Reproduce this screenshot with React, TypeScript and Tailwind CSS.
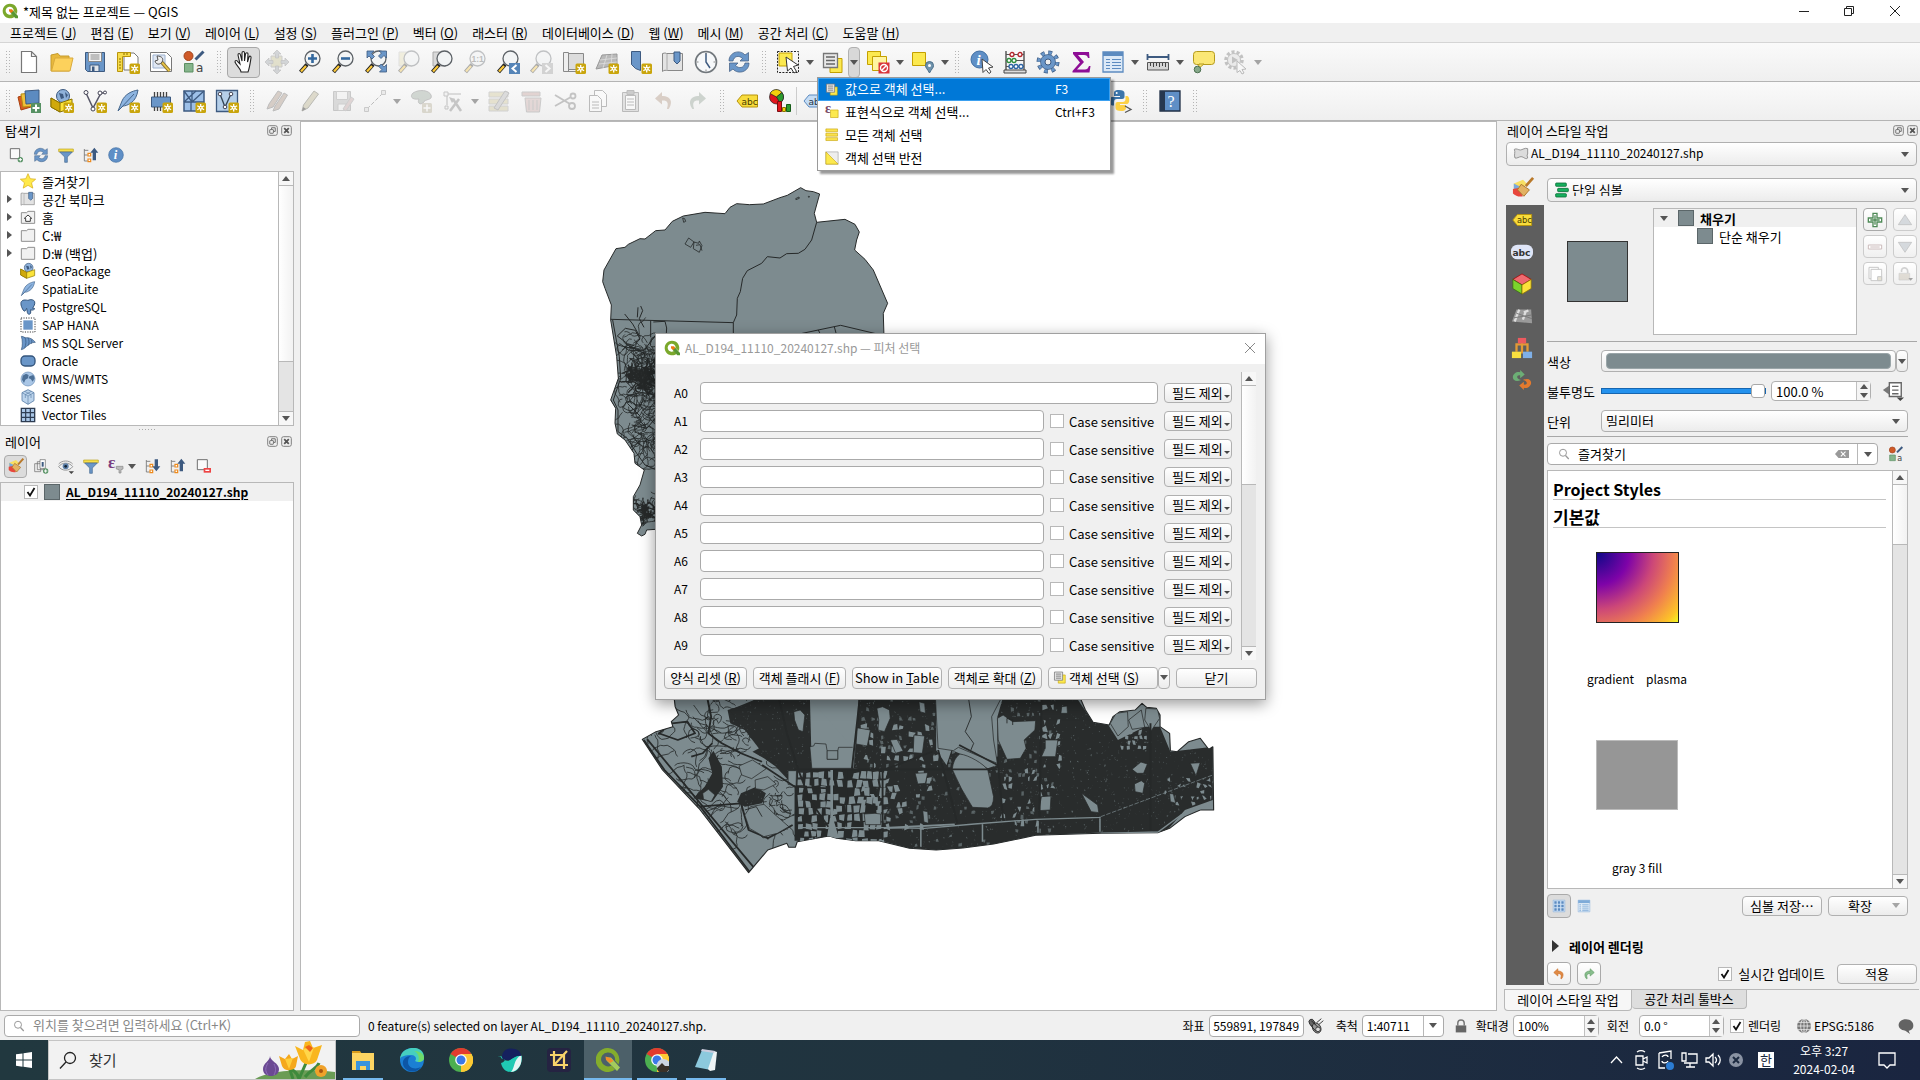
import React, { useId } from "react";

/* ---------- icon drawings (24 x 24 grid) ---------- */

const BLUE = "#6a96c8";
const NAVY = "#3d5a80";

const badge = (
  <g transform="translate(13.5 13.5)">
    <rect width="10.5" height="10.5" rx="1.5" fill="#c9a50c" />
    <path d="M5.2 1.4v7.6M1.8 3.2l6.8 4M8.6 3.2l-6.8 4" stroke="#fff" strokeWidth="1.3" />
    <circle cx="5.2" cy="5.2" r="1.9" fill="#fff" />
    <circle cx="5.2" cy="5.2" r="0.8" fill="#c9a50c" />
  </g>
);

const lens = (
  <>
    <path d="M9 14.5L2.5 22" stroke="#222" strokeWidth="4" />
    <path d="M8 16L3 21.5" stroke="#fcc93a" strokeWidth="2.2" />
    <circle cx="14.5" cy="8.5" r="7.5" fill="#f2f4f5" stroke="#5c6166" strokeWidth="1.3" />
  </>
);

const pencil = (
  <>
    <path d="M4 22l1.5-6L16 2l4.500 3L10 19z" fill="#c9c3a8" stroke="#8a8a80" />
    <path d="M4 22l1.300-4 2.700 2z" fill="#555" />
  </>
);

const sheet = <path d="M4.500 1.500h10l5 5v16h-15zM14.500 1.500v5h5" fill="#fff" stroke="#777" strokeWidth="1.2" />;

const undo = "M10 3L3 9.500l7 6v-4c5-.5 7 2 5 8 0 .8 1.500.8 2 0 5-8 0-13-7-12.500z";

const icons: Record<string, React.ReactNode> = {
  doc: sheet,
  folder: (
    <>
      <path d="M1 5l7-1.500 2 2.500h9v15H1z" fill="#e8b93c" stroke="#c59a2a" />
      <path d="M5 8h18l-3 13H1.500z" fill="#fcd15c" stroke="#d9aa3c" />
    </>
  ),
  save: (
    <>
      <path d="M2.500 2.500h19v19h-17l-2-2z" fill={BLUE} stroke={NAVY} />
      <path d="M5.500 2.500h13v9h-13z" fill="#f4f4f4" stroke="#888" />
      <path d="M7.500 5h9M7.500 7h9M7.500 9h9" stroke="#888" />
      <path d="M7 15h9v6.500H7z" fill="#e2e6ea" stroke={NAVY} />
      <path d="M9 16.500h2.500V21H9z" fill={NAVY} />
    </>
  ),
  layout: (
    <>
      <path d="M8 3h10l4 4v13H8z" fill="#fff" stroke="#777" />
      <path d="M1.500 2.500h13v4h-8v15h-5z" fill="#f6dc4b" stroke="#b8940c" />
      <path d="M3 9h2M3 12h2M3 15h2M3 18h2M8 3v2M11 3v2" stroke="#8a6d00" />
      {badge}
    </>
  ),
  manager: (
    <>
      <path d="M1.500 2.500h16l5 5v14h-21z" fill="#fff" stroke="#777" />
      <path d="M4 5h12v13H4z" fill="#dfe7f3" stroke="#9db1cf" />
      <path d="M12.500 12l8 9" stroke="#8a7330" strokeWidth="3.500" />
      <path d="M13 12.500l7.500 8.500" stroke="#ecc94b" strokeWidth="1.800" />
      <path d="M8 6l1 4-3 1c1 4 5 4 7 1 2-3 0-6-5-6z" fill="#eee" stroke="#555" />
    </>
  ),
  style: (
    <>
      <circle cx="6.500" cy="6" r="4.500" fill="#cf5a28" stroke="#a2431a" />
      <path d="M2.500 13.500h8.500V22H2.500z" fill="#86b58c" stroke="#5c8f63" />
      <path d="M21.500 1.500l-8 8" stroke={NAVY} strokeWidth="3" />
      <text x="14" y="22" fontSize="12" fontFamily="DejaVu Sans" fill="#444">a</text>
    </>
  ),
  hand: (
    <path d="M9 22c0-3-5-7-6-10 0-2 2-2 3 0l2 2-2-9c0-2 2-2 2.500 0l1.500 6V3c0-2 2.500-2 2.500 0v8l1-7c.5-2 2.500-1.500 2.500 0l-.5 8 1.500-5c.7-1.500 2.500-1 2 1-1 6-1.500 10-3 14z" fill="#fff" stroke="#222" strokeWidth="1.100" />
  ),
  pansel: (
    <g opacity=".55">
      <path d="M6 6h11v11H6z" fill="#d3cfab" stroke="#aaa" />
      <path d="M12 0l4 4h-2.500v4h-3V4H8zM12 24l4-4h-2.500v-4h-3v4H8zM0 12l4-4v2.500h4v3H4V16zM24 12l-4-4v2.500h-4v3h4V16z" fill="#b7bbbf" stroke="#999" strokeWidth=".7" />
    </g>
  ),
  zoomin: <>{lens}<path d="M14.500 4v9M10 8.500h9" stroke="#34699f" strokeWidth="2.600" /></>,
  zoomout: <>{lens}<path d="M10 8.500h9" stroke="#34699f" strokeWidth="2.600" /></>,
  zoomfull: (
    <>
      {lens}
      <path d="M3 1h7L7.500 3.500l3 3-2.500 2.500-3-3L3 8zM22.500 1v7L20 5.500l-3 3L14.500 6l3-3L15 1zM22.500 22h-7l2.300-2.500-3-3 2.400-2.500 3 3 2.300-2.500z" fill={BLUE} stroke={NAVY} strokeWidth=".8" />
    </>
  ),
  zoomsel: <g opacity=".35"><path d="M2 2h13v14H2z" fill="#e5deb0" stroke="#bbb" />{lens}</g>,
  zoomlayer: <><path d="M3 2h13v14H3z" fill="#d9d9d9" stroke="#aaa" />{lens}</>,
  native: <g opacity=".35">{lens}<text x="8.500" y="12" fontSize="8.500" fontWeight="bold" fontFamily="Liberation Sans" fill="#555">1:1</text></g>,
  zoomlast: <>{lens}<path d="M13 13h11v11H13z" fill="#5584b7" /><path d="M20.500 15l-4 3.500 4 3.500" fill="none" stroke="#fff" strokeWidth="2" /></>,
  zoomnext: <g opacity=".35">{lens}<path d="M13 13h11v11H13z" fill="#999" /><path d="M16.500 15l4 3.500-4 3.500" fill="none" stroke="#fff" strokeWidth="2" /></g>,
  newmap: <><path d="M5.500 3.500h16v16h-16z" fill="#dcdcdc" stroke="#888" /><path d="M1.500 2.500h5v19h-5z" fill="#eee" stroke="#888" /><path d="M5 21.500h12" stroke="#888" />{badge}</>,
  threeD: <><path d="M7 5l15-1v11l-21 4z" fill="#b9b9b9" stroke="#999" /><path d="M5 10l17-2M4 14l18-2M12 5L8 18M17 4l-1 12" stroke="#dedede" strokeWidth=".8" />{badge}</>,
  bmnew: <><path d="M3.500 1.500h9v19l-5-2-4-4z" fill={BLUE} stroke={NAVY} />{badge}</>,
  bookmark: <><path d="M1.500 3.500c3-1 4 0 4 0h16v17h-16c-2-1-4 1-4 1z" fill="#e3e3e3" stroke="#888" /><path d="M6 4v17" stroke="#aaa" /><path d="M13 2h6v9l-3 3-3-3z" fill={BLUE} stroke={NAVY} /></>,
  clock: <><circle cx="12" cy="12" r="10.500" fill="#f6f8fa" stroke="#71777c" strokeWidth="1.600" /><path d="M12 3v9l4 6" fill="none" stroke="#3d5a80" strokeWidth="1.500" /><path d="M12 2.500v2M12 19.500v2M2.500 12h2M19.500 12h2" stroke="#888" /></>,
  refresh: (
    <>
      <path d="M2 11C2 2 13-1 18 5l3.500-2.500V11h-8.500l2.500-2.500C12 5 7 6 6 11z" fill={BLUE} stroke={NAVY} strokeWidth=".7" />
      <path d="M22 13c0 9-11 12-16 6L2.500 21.500V13H11l-2.500 2.500C12 19 17 18 18 13z" fill={BLUE} stroke={NAVY} strokeWidth=".7" />
    </>
  ),
  select: (
    <>
      <path d="M1.500 1.500h21v21h-21z" fill="none" stroke="#222" strokeDasharray="2 1.300" />
      <path d="M3 3h13v13H3z" fill="#fce94f" stroke="#c4a000" />
      <path d="M10 7l12 8-4.500 1.500 3 5-2.500 1.500-3-5-3.500 3z" fill="#fff" stroke="#333" />
    </>
  ),
  selvalue: (
    <>
      <path d="M9 8.500h12v14H9z" fill="#fce94f" stroke="#c4a000" />
      <path d="M2.500 3.500h14v14h-14z" fill="#e8e8e8" stroke="#777" strokeWidth="1.300" />
      <path d="M5 7h9M5 10.500h9M5 14h9" stroke="#666" strokeWidth="1.300" />
    </>
  ),
  deselect: (
    <>
      <path d="M1.500 1.500h13v13h-13z" fill="#fce94f" stroke="#c4a000" />
      <path d="M6.500 6.500h14v14h-14z" fill="#fff4a0" stroke="#c4a000" />
      <path d="M12.500 12.500h11v11h-11z" fill="#d9343a" />
      <circle cx="18" cy="18" r="3.500" fill="none" stroke="#fff" strokeWidth="1.400" />
      <path d="M15.500 20.500l5-5" stroke="#fff" strokeWidth="1.400" />
    </>
  ),
  selloc: <><path d="M1.500 2.500h13v13h-13z" fill="#fce94f" stroke="#c4a000" /><path d="M18.500 23c-2-4-4-5-4-7.500a4 4 0 018 0c0 2.500-2 3.500-4 7.500z" fill="#6f93ad" stroke="#4b6f8a" /><circle cx="18.500" cy="15.500" r="1.500" fill="#fff" /></>,
  identify: (
    <>
      <circle cx="9.500" cy="9.500" r="8.500" fill="#5f8fc6" stroke="#3f6ea3" />
      <text x="6.500" y="15" fontSize="15" fontStyle="italic" fontWeight="bold" fontFamily="Liberation Serif" fill="#fff">i</text>
      <path d="M12 9l11 8-4.500 1 2.500 4-2 1.500-3-4-3 3z" fill="#fff" stroke="#444" />
    </>
  ),
  abacus: (
    <>
      <path d="M3 1v19M21 1v19" stroke="#444" strokeWidth="1.300" />
      <path d="M1 20h22v3H1z" fill="#ddd" stroke="#444" />
      <path d="M3 4.500h18M3 10.500h18M3 16.500h18" stroke="#555" />
      <g fill="#fff" strokeWidth="1.300">
        <g stroke="#b3262b"><ellipse cx="9" cy="4.500" rx="2" ry="2" /><ellipse cx="17" cy="4.500" rx="2" ry="2" /></g>
        <g stroke="#2d8c3c"><ellipse cx="6" cy="10.500" rx="2" ry="2" /><ellipse cx="11" cy="10.500" rx="2" ry="2" /></g>
        <g stroke="#2b62a3"><ellipse cx="8" cy="16.500" rx="2" ry="2" /><ellipse cx="13" cy="16.500" rx="2" ry="2" /><ellipse cx="18" cy="16.500" rx="2" ry="2" /></g>
      </g>
    </>
  ),
  gear: (
    <>
      <circle cx="12" cy="12" r="9" fill="none" stroke={NAVY} strokeWidth="5" strokeDasharray="3.600 3.470" />
      <circle cx="12" cy="12" r="9" fill="none" stroke={BLUE} strokeWidth="3.500" strokeDasharray="3 4.070" strokeDashoffset="-.3" />
      <circle cx="12" cy="12" r="7.500" fill={BLUE} stroke={NAVY} strokeWidth=".7" />
      <circle cx="12" cy="12" r="3" fill="#f0f0f0" stroke={NAVY} />
    </>
  ),
  sigma: <path d="M4 2h16l.5 6h-1.500c-.5-2-1.500-3-4-3H9l6 7-7 7.500h8c2 0 3-1 4-3.500h1.500L20.500 22.500H3.500V21l7.500-8.500L4 4z" fill="#8e0e96" />,
  table: (
    <>
      <path d="M2 2h20v20H2z" fill="#dce9f7" stroke="#5c8bc0" strokeWidth="1.300" />
      <path d="M2 2h20v4H2z" fill="#5c8bc0" />
      <path d="M5 9.500h4M11 9.500h9M5 12.500h4M11 12.500h9M5 15.500h4M11 15.500h9M5 18.500h4M11 18.500h9" stroke="#5c8bc0" strokeWidth="1.200" />
    </>
  ),
  measure: (
    <>
      <path d="M1.500 7h21M1.500 4v6M22.500 4v6" stroke={NAVY} strokeWidth="1.800" />
      <path d="M1.500 12.500h21V20h-21z" fill="#d6d6d6" stroke="#555" />
      <path d="M4.500 13v3M7.500 13v4M10.500 13v3M13.500 13v4M16.500 13v3M19.500 13v4" stroke="#444" />
    </>
  ),
  tip: <><rect x="1.500" y="1.500" width="21" height="13" rx="3" fill="#fbe775" stroke="#b59a1c" /><path d="M7 14l-1 5 6-5z" fill="#fbe775" stroke="#b59a1c" /><circle cx="5.500" cy="19.500" r="3.300" fill="#86a98a" stroke="#4c6f50" /></>,
  action: <g opacity=".4"><circle cx="10" cy="10" r="8" fill="none" stroke="#777" strokeWidth="3.500" strokeDasharray="3 2" /><circle cx="10" cy="10" r="6.500" fill="#ddd" stroke="#777" /><path d="M8 6.500l6 3.500-6 3.500z" fill="#777" /><path d="M13 11l9 8-4 .5 2 3.500-2 1-2-3.500-3 2z" fill="#fff" stroke="#666" /></g>,
  datasource: (
    <>
      <path d="M1 8l10-3 3 13-10 3z" fill="#d95b22" stroke="#a9410f" />
      <path d="M4 5l11-1 2 13-11 1z" fill="#f0c03a" stroke="#b88c10" />
      <path d="M8 2l14-1v13L9 15z" fill="#5c8bc0" stroke={NAVY} />
      <path d="M14 14h10v10H14z" fill="#569163" /><path d="M19 15.500v7M15.500 19h7" stroke="#fff" strokeWidth="2" />
    </>
  ),
  geopkg: (
    <>
      <circle cx="13" cy="7" r="6.500" fill="#8fb2da" stroke={NAVY} /><path d="M9 4l4 1 1 4-3 1zM15 3l3 3-2 3z" fill={NAVY} />
      <path d="M1 9l9 5 12-4v9l-12 4-9-5z" fill="#fbe33a" stroke="#8a7200" /><path d="M1 9l9 5v9l-9-5z" fill="#d0a90c" stroke="#8a7200" />
    </>
  ),
  vec: <><path d="M3 4l7 15 8-15h4" fill="none" stroke="#556" strokeWidth="1.500" /><g fill="#fff" stroke="#445"><circle cx="3" cy="3.500" r="2" /><circle cx="10" cy="20" r="2" /><circle cx="17" cy="4" r="2" /><circle cx="22" cy="3.500" r="1.500" /></g></>,
  feather: <path d="M2 22L6 12C9 5 16 2 22 1c-1 6-3 10-7 13-3 2-6 3-8 3zM4 20L18 5" fill="#8db4e0" stroke="#45668c" />,
  chip: <><path d="M2.500 8h19v10h-19z" fill={BLUE} stroke={NAVY} /><path d="M5.500 3v5M8.500 3v5M11.500 3v5M14.500 3v5M17.500 3v5M5.500 18v4M8.500 18v4M11.500 18v4" stroke="#444" strokeWidth="1.300" /></>,
  mesh: <><path d="M2 2h20v20H2z" fill="#9dc0e8" stroke={NAVY} strokeWidth="1.500" /><path d="M2 13h20M9 13v9M2 2l8 11 12-11M10 2v11M2 13L14 2" fill="none" stroke={NAVY} strokeWidth="1.300" /></>,
  virt: <><path d="M1.500 1.500h21v21h-21z" fill="#b5cfe9" stroke={NAVY} strokeWidth="1.300" /><path d="M5 5l5 13 6-13" fill="none" stroke="#345" strokeWidth="1.300" /><g fill="#fff" stroke="#445"><circle cx="5" cy="5" r="1.800" /><circle cx="10" cy="18" r="1.800" /><circle cx="16" cy="5" r="1.800" /></g></>,
  pencils: <g opacity=".5"><path d="M2 20l2-5L13 2l4 2-9 14zM8 22l2-5L19 4l3.500 2L14 20z" fill="#b9a79a" stroke="#888" /></g>,
  pencil: <g opacity=".55">{pencil}</g>,
  savedim: <g opacity=".35"><path d="M2.500 2.500h17v19h-17z" fill="#aaa" stroke="#777" /><path d="M5.500 2.500h11v8h-11zM7 15h8v6.500H7z" fill="#eee" stroke="#888" /><path d="M12 20l8-12 3 2-8 12z" fill="#b99" stroke="#888" /></g>,
  digit: <g opacity=".45"><path d="M4 20L20 4" stroke="#777" strokeDasharray="4 2" /><path d="M1.500 18.500h4v4h-4zM18.500 1.500h4v4h-4z" fill="#ddd" stroke="#999" /></g>,
  blob: <g opacity=".4"><path d="M4 4c6-4 16-3 18 2 2 6-6 3-8 8-3 2-6 0-4-4-8 1-9-3-6-6z" fill="#9aa79b" stroke="#777" /><rect x="13" y="14" width="10" height="10" rx="1.500" fill="#b5ae96" /><path d="M18 15.500v7M14.500 19h7" stroke="#fff" strokeWidth="1.500" /></g>,
  vertex: <g opacity=".5"><path d="M6 6v10M6 5h14" stroke="#888" /><path d="M3 3h4v4H3zM4 17h3v3H4z" fill="#eee" stroke="#999" /><path d="M9 22L18 10M12 10l8 12" stroke="#999" strokeWidth="2.500" /><path d="M8 8l6 2-3 4z" fill="#999" /></g>,
  attrs: <g opacity=".45"><path d="M2 3h19v5H2zM2 10h19v5H2zM2 17h19v5H2z" fill="#d3cba2" stroke="#aaa" /><path d="M7 19L18 2l4 2-11 17z" fill="#bbb" stroke="#888" /></g>,
  trash: <g opacity=".45"><path d="M2 3h18v4H2z" fill="#c9a9a5" stroke="#999" /><path d="M5 9h16l-1.500 14h-13z" fill="#d0b5b3" stroke="#999" /><path d="M9 11v10M13 11v10M17 11v10" stroke="#999" /></g>,
  cut: <g opacity=".45" fill="none" stroke="#888" strokeWidth="1.800"><path d="M2 6l15 9M2 17L18 8" /><circle cx="19" cy="17" r="3" /><circle cx="20" cy="7" r="2.500" /></g>,
  copy: <g opacity=".45" fill="#fff" stroke="#777"><path d="M8.500 1.500h8l4 4v12h-12z" /><path d="M3.500 6.500h8l4 4v12h-12z" /><path d="M6 13h7M6 16h7M6 19h7" /></g>,
  paste: <g opacity=".45" stroke="#777"><path d="M3.500 3.500h16v19h-16z" fill="#ccc" /><path d="M6.500 6.500h10v14h-10z" fill="#fff" /><path d="M8 1.500h7v4H8z" fill="#999" /><path d="M8 10h7M8 13h7M8 16h7" /></g>,
  undodim: <path d={undo} fill="#cdbdb2" opacity=".7" />,
  redodim: <path d={undo} transform="matrix(-1 0 0 1 24 0)" fill="#bcc4bd" opacity=".7" />,
  undo: <path d={undo} fill="#e08a45" stroke="#c86c26" />,
  redo: <path d={undo} transform="matrix(-1 0 0 1 24 0)" fill="#88bd8c" stroke="#5c9761" />,
  label: <><path d="M2 12l5-6h15.500v12H7z" fill="#f8dc3c" stroke="#b8940c" /><text x="6.500" y="15.500" fontSize="9" fontFamily="DejaVu Sans" fill="#4a3c00">abc</text></>,
  labelblue: <><path d="M2 12l5-6h15.500v12H7z" fill="#c4dcf5" stroke="#5c8bc0" /><text x="6.500" y="15.500" fontSize="9" fontFamily="DejaVu Sans" fill="#234">abc</text></>,
  chart: (
    <>
      <circle cx="8.500" cy="8" r="7" fill="#e0161d" stroke="#222" strokeWidth=".7" />
      <path d="M8.500 8L2 4.500A7 7 0 0114 3.500z" fill="#f4d20c" stroke="#222" strokeWidth=".7" />
      <path d="M8.500 8L14 3.500A7 7 0 0112 14z" fill="#2b9b2e" stroke="#222" strokeWidth=".7" />
      <path d="M9.500 12.500h4v10h-4z" fill="#e0161d" stroke="#7a0c10" /><path d="M14.500 18.500h3v4h-3z" fill="#f4d20c" stroke="#8a7200" /><path d="M18.500 15.500h4v7h-4z" fill="#2b9b2e" stroke="#165c18" />
    </>
  ),
  python: (
    <>
      <path d="M11 1c-5 0-5 2-5 4v2h6v1H4c-3 0-3 8 0 8.500h2V13c0-2 1-3 3-3h5c2 0 2.500-1 2.500-2.500V4c0-2-2-3-5.500-3z" fill="#3c75aa" />
      <path d="M13 22c5 0 5-2 5-4v-2h-6v-1h7c3 0 3-8 0-8h-1.500v3c0 2-1 3-3 3h-5C8 13 7.500 14 7.500 15.500V19c0 2 2 3 5.500 3z" fill="#fcd045" />
      <circle cx="8.700" cy="4" r="1" fill="#fff" />
      <path d="M17 17l6 3.500-6 3" fill="none" stroke="#555" strokeWidth="1.300" />
    </>
  ),
  help: <><path d="M2 2h20v20H2z" fill="#5f8fc6" stroke="#1f2f45" strokeWidth="1.300" /><path d="M2 2h5v20H2z" fill="#27384f" /><text x="9.500" y="18" fontSize="16" fontFamily="Liberation Serif" fill="#fff">?</text></>,
  addlayer: <><path d="M3.500 2.500h14v15h-14z" fill="#fafafa" stroke="#666" strokeWidth="1.400" /><circle cx="18.500" cy="19" r="4" fill="#569163" /><path d="M18.500 16.500v5M16 19h5" stroke="#fff" strokeWidth="1.500" /></>,
  dellayer: <><path d="M3.500 2.500h15v15h-15z" fill="#fafafa" stroke="#666" strokeWidth="1.400" /><path d="M13 15h11v7H13z" fill="#e44" /><path d="M15.500 18.500h6" stroke="#fff" strokeWidth="2" /></>,
  filter: <><path d="M1 3h22v4H1z" fill="#f8e04a" stroke="#b8a020" /><path d="M2.500 7.500h19L14 15v8h-4v-8z" fill="#6a96c8" stroke="#44688f" /></>,
  collapse: <><path d="M2 3v18h5M2 5h6M2 12h5" fill="none" stroke="#777" strokeWidth="1.300" /><path d="M7.500 9.500h4v4h-4zM7.500 18h4v4h-4z" fill="#fff" stroke="#ee8a1c" strokeWidth="1.800" /><path d="M17 1l6 7.500h-3.500V20h-5V8.500H11z" fill={NAVY} /></>,
  expand: <><path d="M2 3v18h5M2 5h6M2 12h5" fill="none" stroke="#777" strokeWidth="1.300" /><path d="M7.500 9.500h4v4h-4zM7.500 18h4v4h-4z" fill="#fff" stroke="#ee8a1c" strokeWidth="1.800" /><path d="M17 20l6-7.500h-3.500V2h-5v10.500H11z" fill={NAVY} /></>,
  info: <><circle cx="12" cy="12" r="11" fill="#5f8fc6" stroke="#3f6ea3" /><text x="8.500" y="18.500" fontSize="19" fontStyle="italic" fontWeight="bold" fontFamily="Liberation Serif" fill="#fff">i</text></>,
  brush: <><path d="M2 7l10-4 4 4-6 7H2z" fill="#f8df63" /><path d="M2 7l6 3-2 4H2z" fill="#7aa8dc" /><path d="M1 13l6-1 5 9c-4 1-8 0-11-3z" fill="#e8473c" /><path d="M23 1l-8 9" stroke="#b9792a" strokeWidth="3" /><path d="M10 8l9 6-6 7-7-7z" fill="#e3b263" stroke="#a87428" /></>,
  addgroup: <><path d="M2.500 8.500h9v12h-9zM6.500 5.500h9v12h-9z" fill="#eee" stroke="#666" /><path d="M10.500 2.500h8v13h-8z" fill="#fff" stroke="#666" /><path d="M14.500 6v7" stroke={NAVY} strokeWidth="3" /><circle cx="19" cy="19.500" r="4" fill="#569163" /><path d="M19 17v5M16.500 19.500h5" stroke="#fff" strokeWidth="1.500" /></>,
  eye: <><path d="M1 13C6 6 17 6 22 13c-5 7-16 7-21 0z" fill="#eef1f4" stroke="#888" strokeWidth="1.300" /><circle cx="11.500" cy="12.500" r="4.500" fill="#5c7fa8" /><circle cx="11.500" cy="12.500" r="2" fill="#123" /><path d="M1 9C6 3 17 3 22 9" fill="none" stroke="#999" strokeWidth="1.500" /><path d="M16 20h8l-4 4z" fill="#444" /></>,
  eps: <><text x="0" y="15" fontSize="26" fontWeight="bold" fontFamily="Liberation Serif" fill="#7a3f80">ε</text><path d="M12.500 12.500h10v4l-3 1v5h-3v-5l-4-1z" fill="#bbb" stroke="#888" /></>,
  star: <path d="M12 1l3.300 7.500 8.200.8-6.200 5.400 1.900 8L12 18.500l-7.200 4.200 1.900-8L.5 9.300l8.200-.8z" fill="#ffe94a" stroke="#d4a80c" />,
  dir: <path d="M2 5.500h8l2-2h10v18H2z" fill="#f1f1f1" stroke="#888" strokeWidth="1.400" />,
  home: <><path d="M2 5.500h8l2-2h10v18H2z" fill="#f1f1f1" stroke="#888" strokeWidth="1.400" /><path d="M6.500 14l5.500-5 5.500 5h-2v4.500h-7V14z" fill="#fff" stroke="#222" strokeWidth="1.300" /></>,
  elephant: <path d="M2 4c3-4 8-2 10-2 4-2 9-1 10 2 1 5-2 7-3 10 2 0 3 0 3 1-2 2-5 2-6 1v5c-1 3-5 2-5-1l-1-6c-2 2-1 5-4 4C3 15 0 7 2 4z" fill="#6a96c8" stroke="#34557c" strokeWidth="1.500" />,
  hana: <><path d="M5 5h14v14H5z" fill="#6a96c8" /><path d="M1.500 1.500h21v21h-21z" fill="none" stroke="#333" strokeWidth="1.500" strokeDasharray="1.700 2" /></>,
  mssql: <path d="M2 2c4 0 5 3 8 2 5 0 9 2 13 7-6 0-9 3-13 6-2 2-4 4-8 5 2-5 2-14 0-20zM7 3c3 5 2 12 0 16M12 4c2 4 2 8 0 12M17 7c1 3 1 4 0 6" fill="#6a96c8" stroke="#34557c" />,
  oracle: <rect x="1.500" y="4.500" width="21" height="15" rx="6" fill="#6a96c8" stroke="#34557c" strokeWidth="2" />,
  globe: <><circle cx="12" cy="12" r="10.500" fill="#a9c6e6" stroke="#6a8db5" /><path d="M4 7l5-3 4 2-1 5-4 2-2 5-3-5zM14 8l6-2 2 5-3 5-3-4-3-1z" fill="#4c6f96" /></>,
  cube: <><path d="M12 1l9 4.500v12L12 23l-9-5.500v-12z" fill="#bcd4ec" stroke="#5f83aa" strokeWidth="1.300" /><path d="M3 5.500l9 5 9-5M12 10.500V23M7 3.500l9.500 5v5M17 3.500L8 8.500v5" fill="none" stroke="#5f83aa" /></>,
  tiles: <><path d="M2 2h20v20H2z" fill="#a9c6e6" stroke="#2e3d52" strokeWidth="2" /><path d="M8.500 2v20M15.500 2v20M2 8.500h20M2 15.500h20" stroke="#2e3d52" strokeWidth="1.800" /></>,
  polygon: <path d="M2 5c3-2 6 1 9 1s7-4 11-2v8c-2 2 0 4 0 6-3 3-6-2-10-2-3 0-6 3-9 2-2-4 1-9-1-13z" fill="#dcdcdc" stroke="#888" strokeWidth="1.300" />,
  single: <g fill="#16b05e" stroke="#0a6b36" strokeWidth="1.200"><rect x="2.500" y="1.500" width="16" height="5" rx="1" /><rect x="5.500" y="9.500" width="16" height="5" rx="1" /><rect x="2.500" y="17.500" width="16" height="5" rx="1" /></g>,
  abc: <><rect x="0" y="4" width="24" height="16" rx="7" fill="#dfe5f7" /><text x="1.500" y="16" fontSize="10" fontWeight="bold" fontFamily="DejaVu Sans" fill="#333">abc</text></>,
  rgb: <g stroke="#fff" strokeWidth=".8"><path d="M12 1l10 6-10 6L2 7z" fill="#ee6a70" stroke="#a00" /><path d="M2 7l10 6v10L2 17z" fill="#7bd32c" stroke="#386a0c" /><path d="M22 7l-10 6v10l10-6z" fill="#fce23a" stroke="#8a7200" /></g>,
  terrain: <><path d="M6 5h16l1 15-22-2z" fill="#9a9a9a" /><path d="M9 5l-5 13M16 7l-3 9M14 8l5-2" stroke="#ddd" strokeWidth="2.500" /><path d="M3 14l19-3M6 9l17 6" stroke="#777" /></>,
  tree: <><path d="M12 6v12M6 16V8h12v8" fill="none" stroke="#e39a35" strokeWidth="2.500" /><path d="M7.500 1h9v6h-9z" fill="#ec5a5f" /><path d="M1 16h10v7H1z" fill="#fae03f" /><path d="M13 16h10v7H13z" fill="#7fb0e8" /></>,
  history: <><path d="M11 12C2 16 0 8 4 5c2-2 4-2 6-1.500V1l5 5-5 4V7C6 6 5 11 11 12z" fill="#6cae75" /><path d="M13 12c9-4 11 4 7 7-2 2-4 2-6 1.500V23l-5-5 5-4v3c4 1 5-4-1-5z" fill="#e57a2e" /></>,
  override: <><path d="M8 3h13v15H8z" fill="#fff" stroke="#666" strokeWidth="1.500" /><path d="M8 6L1 11l7 5z" fill="#777" /><path d="M11 7h7M11 11h7M11 15h7" stroke="#666" strokeWidth="1.500" /><path d="M16 19h8l-4 4z" fill="#444" /></>,
  gridview: <><path d="M2 2h20v20H2z" fill="#cfe2f5" stroke="#8cb4dd" /><path d="M4 4h4v4H4zM10 4h4v4h-4zM16 4h4v4h-4zM4 10h4v4H4zM10 10h4v4h-4zM16 10h4v4h-4zM4 16h4v4H4zM10 16h4v4h-4zM16 16h4v4h-4z" fill="#5c8bc0" /></>,
  listview: <><path d="M2 2h20v20H2z" fill="#e3edf7" stroke="#8cb4dd" /><path d="M2 2h20v5H2z" fill="#7fabd8" /><path d="M4 10h3M9 10h11M4 13.500h3M9 13.500h11M4 17h3M9 17h11M4 20h3M9 20h11" stroke="#7fabd8" strokeWidth="1.500" /></>,
  plus: <path d="M9 2h6v7h7v6h-7v7H9v-7H2V9h7zM12 5v14M5 12h14" fill="#fff" stroke="#4f8a57" strokeWidth="2" />,
  minus: <path d="M2 9h20v6H2zM5 12h14" fill="#fff" stroke="#ccbcbc" strokeWidth="1.500" />,
  up: <path d="M12 4l10 15H2z" fill="#d5d9dd" stroke="#bbb" />,
  down: <path d="M12 20L2 5h20z" fill="#d5d9dd" stroke="#bbb" />,
  dup: <g fill="#fff" stroke="#c8c8c8" strokeWidth="1.500"><path d="M3 2h14v17H3z" /><path d="M6 5h16v17H6z" /><path d="M16 16h6v6h-6z" fill="#e6e2d4" /></g>,
  lockopen: <g opacity=".5"><path d="M7 9c-2-8 9-8 9-1v3" fill="none" stroke="#aaa" strokeWidth="2.500" /><path d="M3 11h16v10H3z" fill="#cbc3b5" stroke="#aaa" /><path d="M17 18h7l-3.500 4z" fill="#555" /></g>,
  lock: <><path d="M6.500 11V7c0-7 11-7 11 0v4" fill="none" stroke="#777" strokeWidth="2.500" /><path d="M3 11h18v12H3z" fill="#666" /></>,
  extent: (
    <g stroke="#333" strokeWidth="1.300">
      <ellipse cx="6" cy="7" rx="4" ry="5.500" transform="rotate(-30 6 7)" fill="#666" />
      <ellipse cx="13" cy="15" rx="6" ry="8" transform="rotate(-30 13 15)" fill="#999" />
      <path d="M4 11l8 9M9 8l10 10M13 7l7-6M16 10l7-6M5 4l6 6" stroke="#222" />
      <circle cx="15" cy="17" r="3.500" fill="#ddd" />
    </g>
  ),
  crs: <><circle cx="12" cy="12" r="10.500" fill="#777" /><path d="M1 12h22M12 1v22M3 6.500h18M3 17.500h18" stroke="#eee" strokeWidth="1.200" /><ellipse cx="12" cy="12" rx="5" ry="10.500" fill="none" stroke="#eee" strokeWidth="1.200" /></>,
  bubble: <path d="M12 2c14 0 14 17 4 17l2 5-7-5C-3 18-2 2 12 2z" fill="#636363" />,
  search: <><circle cx="10" cy="9.500" r="7" fill="none" stroke="#999" strokeWidth="2" /><path d="M15 15l6.500 7" stroke="#999" strokeWidth="2.500" /></>,
  clear: <><path d="M0 12l6-7h18v14H6z" fill="#999" /><path d="M10 8l8 8M18 8l-8 8" stroke="#fff" strokeWidth="1.800" /></>,
  expr: <><text x="0" y="14" fontSize="24" fontWeight="bold" fontFamily="Liberation Serif" fill="#7a4a66">ε</text><path d="M9.500 8.500h13v13h-13z" fill="#fce94f" stroke="#c4a000" /></>,
  all: <path d="M1.500 1.500h20v5h-20zM1.500 9h20v5h-20zM1.500 16.500h20v5h-20z" fill="#fbe24c" stroke="#c4a000" />,
  invert: <><path d="M1.500 1.500h21v21h-21z" fill="#eee" stroke="#999" /><path d="M1.500 1.500v21h21z" fill="#fce94f" stroke="#c4a000" /></>,
  float: <><rect x="1.500" y="1.500" width="21" height="21" rx="4" fill="none" stroke="#777" strokeWidth="2" /><rect x="6" y="10" width="8" height="8" rx="1" fill="none" stroke="#666" strokeWidth="2" /><path d="M10 9V6h8v8h-3" fill="none" stroke="#666" strokeWidth="2" /></>,
  close: <><rect x="1.500" y="1.500" width="21" height="21" rx="4" fill="none" stroke="#777" strokeWidth="2" /><path d="M7 7l10 10M17 7L7 17" stroke="#555" strokeWidth="4" /></>,
  qgis: <><path d="M12 1a11 11 0 107 19.500l-4-4A6 6 0 1117.500 12l4.500 4.500A11 11 0 0012 1z" fill="#7ba82c" /><path d="M13 11.500h4l7 8v3.500h-4l-7-8z" fill="#589632" /><path d="M10.500 9.500h4.500l2 2.500-3.500 3-3-2.500z" fill="#ee7913" /></>,
};

const sizes: Record<number, string> = { 11: "size-[11px]", 12: "size-3", 14: "size-3.5", 16: "size-4", 22: "size-[22px]", 24: "size-6" };

function Icon({ name, s = 16 }: { name: string; s?: number }) {
  return (
    <svg viewBox="0 0 24 24" className={`${sizes[s]} shrink-0 overflow-visible`} fill="none" aria-hidden="true">
      {icons[name]}
    </svg>
  );
}

const Caret = ({ up = false, dim = false }: { up?: boolean; dim?: boolean }) => (
  <svg viewBox="0 0 8 5" className={`h-[5px] w-2 shrink-0 ${dim ? "opacity-50" : ""}`} aria-hidden="true">
    <path d={up ? "M0 5h8L4 0z" : "M0 0h8L4 5z"} fill="#555" />
  </svg>
);

/* ---------- basic controls ---------- */

const FACE = "rounded-sm border border-[#b0b0b0] bg-linear-to-b from-white to-[#ececec]";

function Tool({ name, menu = false, dim = false, pressed = false }: { name: string; menu?: boolean; dim?: boolean; pressed?: boolean }) {
  return (
    <button
      aria-label={name}
      className={`flex h-[31px] shrink-0 items-center ${menu ? "w-[45px] gap-1.5 pl-1" : "w-[33px] justify-center"} ${pressed ? "rounded-sm border border-[#a8a8a8] bg-[#dcdcdc]" : ""}`}
    >
      <Icon name={name} s={24} />
      {menu && <Caret dim={dim} />}
    </button>
  );
}

const Grip = ({ first = false }: { first?: boolean }) => (
  <span className={`block h-6 w-[5px] shrink-0 bg-[radial-gradient(#b5b5b5_35%,transparent_40%)] bg-size-[3px_3px] ${first ? "mr-0.5 ml-[5px]" : "mx-1.5"}`} />
);

function Check({ label, checked = false, gap = "gap-1" }: { label: string; checked?: boolean; gap?: string }) {
  return (
    <label className={`flex items-center ${gap} whitespace-nowrap`}>
      <span className="grid size-3.5 place-items-center border border-[#b8b8b8] bg-white">
        <input type="checkbox" defaultChecked={checked} className="peer col-start-1 row-start-1 size-3 appearance-none" />
        <svg viewBox="0 0 10 10" className="pointer-events-none col-start-1 row-start-1 hidden size-2.5 peer-checked:block">
          <path d="M1.500 5l2.500 3.500L8.500 1" fill="none" stroke="#111" strokeWidth="1.800" />
        </svg>
      </span>
      {label}
    </label>
  );
}

function Combo({ label, value, icon, className = "" }: { label: string; value: string; icon?: string; className?: string }) {
  return (
    <div className={`relative flex items-center ${FACE} ${className}`}>
      {icon && <span className="pointer-events-none absolute left-1.5"><Icon name={icon} s={16} /></span>}
      <select aria-label={label} className={`h-full w-full appearance-none bg-transparent pb-0.5 ${icon ? "pl-6" : "pl-1"} outline-none`}>
        <option>{value}</option>
      </select>
      <span className="pointer-events-none absolute right-[7px] flex"><Caret /></span>
    </div>
  );
}

function Spin({ label, value, className = "" }: { label: string; value: string; className?: string }) {
  return (
    <div className={`flex rounded-sm border border-[#b0b0b0] bg-white ${className}`}>
      <input aria-label={label} defaultValue={value} className="w-0 min-w-0 flex-1 bg-transparent pl-1 outline-none" />
      <span className="flex w-3.5 flex-col items-center justify-center gap-1 border-l border-[#c0c0c0] bg-[#f5f5f5]">
        <button aria-label="증가" className="flex"><Caret up /></button>
        <button aria-label="감소" className="flex"><Caret /></button>
      </span>
    </div>
  );
}

function Scroll({ thumb, className = "" }: { thumb: string; className?: string }) {
  return (
    <div className={`flex w-[15px] shrink-0 flex-col border-l border-[#b8b8b8] bg-[#e4e4e4] ${className}`}>
      <button aria-label="위로" className="flex h-3.5 items-center justify-center border-b border-[#b8b8b8] bg-[#f7f7f7]"><Caret up /></button>
      <div className="flex-1">
        <div className={`border-b border-[#b8b8b8] bg-linear-to-r from-white to-[#f2f2f2] ${thumb}`} />
      </div>
      <button aria-label="아래로" className="flex h-3.5 items-center justify-center border-t border-[#b8b8b8] bg-[#f7f7f7]"><Caret /></button>
    </div>
  );
}

function DockTitle({ title }: { title: string }) {
  return (
    <div className="flex h-[18px] items-center gap-[3px] text-[13px]">
      <h2 className="flex-1">{title}</h2>
      <button aria-label="분리"><Icon name="float" s={11} /></button>
      <button aria-label="닫기"><Icon name="close" s={11} /></button>
    </div>
  );
}

/* ---------- menu bar and toolbars ---------- */

const menus: [string, string][] = [
  ["프로젝트", "J"], ["편집", "E"], ["보기", "V"], ["레이어", "L"], ["설정", "S"], ["플러그인", "P"], ["벡터", "O"],
  ["래스터", "R"], ["데이터베이스", "D"], ["웹", "W"], ["메시", "M"], ["공간 처리", "C"], ["도움말", "H"],
];

const selectItems = [
  { icon: "selvalue", text: "값으로 객체 선택...", key: "F3" },
  { icon: "expr", text: "표현식으로 객체 선택...", key: "Ctrl+F3" },
  { icon: "all", text: "모든 객체 선택", key: "" },
  { icon: "invert", text: "객체 선택 반전", key: "" },
];

function SelectMenu() {
  return (
    <ul role="menu" className="absolute top-[30px] left-0 z-30 w-[294px] border border-[#9a9a9a] bg-white shadow-[3px_3px_2px_#00000066]">
      {selectItems.map((it, i) => (
        <li key={it.text} role="menuitem" className={`flex h-[23px] items-center pb-px text-[13px] ${i === 0 ? "border border-[#3ba0f0] bg-[#0078d7] pr-3.5 pl-1.5 text-white" : "pr-[15px] pl-[7px]"}`}>
          <Icon name={it.icon} s={14} />
          <span className="ml-1.5 flex-1">{it.text}</span>
          <span className="w-10 text-xs">{it.key}</span>
        </li>
      ))}
    </ul>
  );
}

const BAR = "flex h-[39px] shrink-0 items-center border-b border-[#b4b4b4] bg-linear-to-b from-[#fafafa] to-[#efefef]";

function Toolbars() {
  return (
    <>
      <div className={BAR}>
        <Grip first />
        {["doc", "folder", "save", "layout", "manager", "style"].map((n) => <Tool key={n} name={n} />)}
        <Grip />
        <Tool name="hand" pressed />
        {["pansel", "zoomin", "zoomout", "zoomfull", "zoomsel", "zoomlayer", "native", "zoomlast", "zoomnext", "newmap", "threeD", "bmnew", "bookmark", "clock", "refresh"].map((n) => <Tool key={n} name={n} />)}
        <Grip />
        <Tool name="select" menu />
        <div className="relative flex w-[45px] shrink-0 items-center">
          <button aria-label="selvalue" className="flex w-[31px] justify-center"><Icon name="selvalue" s={24} /></button>
          <button aria-label="선택 메뉴" aria-expanded="true" className="flex h-[31px] w-3 items-center justify-center rounded-sm border border-[#b0b0b0] bg-[#d8d8d8]"><Caret /></button>
          <SelectMenu />
        </div>
        <Tool name="deselect" menu />
        <Tool name="selloc" menu />
        <span className="-ml-1"><Grip /></span>
        {["identify", "abacus", "gear", "sigma"].map((n) => <Tool key={n} name={n} />)}
        <Tool name="table" menu />
        <Tool name="measure" menu />
        <Tool name="tip" />
        <Tool name="action" menu dim />
      </div>
      <div className={BAR}>
        <Grip first />
        {["datasource", "geopkg", "vec", "feather", "chip", "mesh", "virt"].map((n) => (
          <span key={n} className="relative flex">
            <Tool name={n} />
            {n !== "datasource" && (
              <svg viewBox="13 13 11 11" className="pointer-events-none absolute right-1 bottom-1 size-[11px]">{badge}</svg>
            )}
          </span>
        ))}
        <Grip />
        {["pencils", "pencil", "savedim"].map((n) => <Tool key={n} name={n} />)}
        <Tool name="digit" menu dim />
        <Tool name="blob" />
        <Tool name="vertex" menu dim />
        {["attrs", "trash", "cut", "copy", "paste", "undodim", "redodim"].map((n) => <Tool key={n} name={n} />)}
        <Grip />
        <Tool name="label" />
        <Tool name="chart" />
        <span className="h-7 w-px bg-[#ccc]" />
        <Tool name="labelblue" />
        <span className="w-[273px] shrink-0" />
        <Tool name="python" />
        <Grip />
        <Tool name="help" />
        <Grip />
      </div>
    </>
  );
}

/* ---------- left docks ---------- */

const browser: { icon: string; text: string; branch?: boolean; latin?: boolean }[] = [
  { icon: "star", text: "즐겨찾기" },
  { icon: "bookmark", text: "공간 북마크", branch: true },
  { icon: "home", text: "홈", branch: true },
  { icon: "dir", text: "C:₩", branch: true },
  { icon: "dir", text: "D:₩ (백업)", branch: true },
  { icon: "geopkg", text: "GeoPackage", latin: true },
  { icon: "feather", text: "SpatiaLite", latin: true },
  { icon: "elephant", text: "PostgreSQL", latin: true },
  { icon: "hana", text: "SAP HANA", latin: true },
  { icon: "mssql", text: "MS SQL Server", latin: true },
  { icon: "oracle", text: "Oracle", latin: true },
  { icon: "globe", text: "WMS/WMTS", latin: true },
  { icon: "cube", text: "Scenes", latin: true },
  { icon: "tiles", text: "Vector Tiles", latin: true },
];

const Right = () => (
  <svg viewBox="0 0 5 8" className="h-2 w-[5px]" aria-hidden="true"><path d="M0 0v8l5-4z" fill="#555" /></svg>
);

function LeftDocks() {
  return (
    <aside className="flex w-[294px] shrink-0 flex-col">
      <div className="pr-0.5 pl-[5px]"><DockTitle title="탐색기" /></div>
      <div className="flex h-8 items-center gap-[9px] pl-2">
        {["addlayer", "refresh", "filter", "collapse", "info"].map((n) => (
          <button key={n} aria-label={n}><Icon name={n} s={16} /></button>
        ))}
      </div>
      <div className="flex h-[255px] border border-[#b8b8b8] bg-white">
        <ul className="flex-1 overflow-hidden">
          {browser.map((b) => (
            <li key={b.text} className={`flex h-[18px] items-center ${b.latin ? "text-xs" : "text-[13px]"}`}>
              <span className="flex w-[19px] pl-1.5">{b.branch && <Right />}</span>
              <Icon name={b.icon} s={16} />
              <span className="ml-1.5">{b.text}</span>
            </li>
          ))}
        </ul>
        <Scroll thumb="h-44" />
      </div>
      <div className="flex h-1.5 items-center justify-center"><span className="h-px w-4 bg-[repeating-linear-gradient(90deg,#aaa_0_1px,transparent_1px_3px)]" /></div>
      <div className="pr-0.5 pl-[5px]"><DockTitle title="레이어" /></div>
      <div className="flex h-8 items-center pl-1">
        <button aria-label="brush" className="flex size-[23px] items-center justify-center rounded-sm border border-[#aaa] bg-[#dcdcdc]"><Icon name="brush" s={16} /></button>
        <div className="ml-1.5 flex items-center gap-[9px]">
          <button aria-label="addgroup"><Icon name="addgroup" s={16} /></button>
          <button aria-label="eye"><Icon name="eye" s={16} /></button>
          <button aria-label="filter"><Icon name="filter" s={16} /></button>
          <button aria-label="eps" className="flex items-center gap-1"><Icon name="eps" s={16} /><Caret /></button>
          <button aria-label="expand"><Icon name="expand" s={16} /></button>
          <button aria-label="collapse"><Icon name="collapse" s={16} /></button>
          <button aria-label="dellayer"><Icon name="dellayer" s={16} /></button>
        </div>
      </div>
      <div className="min-h-0 flex-1 border border-[#b8b8b8] bg-white">
        <div className="flex h-[18px] items-center bg-[#f0f0f0] pl-[23px] text-xs font-bold">
          <Check label="" checked gap="gap-0" />
          <span className="ml-1.5 size-4 border border-[#5b6669] bg-[#7d8b8f]" />
          <span className="ml-1.5 underline underline-offset-2">AL_D194_11110_20240127.shp</span>
        </div>
      </div>
    </aside>
  );
}

/* ---------- map ---------- */

type Pt = [number, number];

function rng(seed: number) {
  let s = seed;
  return () => {
    s = (s * 1664525 + 1013904223) % 4294967296;
    return s / 4294967296;
  };
}

/* Irregular parcels laid out on a jittered grid. */
function parcels(x0: number, y0: number, x1: number, y1: number, cw: number, ch: number, gap: number, p: number, seed: number) {
  const r = rng(seed);
  let d = "";
  for (let y = y0; y < y1; y += ch)
    for (let x = x0 + r() * cw * 0.4; x < x1; x += cw * (0.75 + r() * 0.5)) {
      const keep = r() < p;
      const j = () => (r() - 0.5) * gap * 2;
      const dy = (r() - 0.5) * ch * 0.2;
      const pts: Pt[] = [
        [x + gap + j(), y + gap + dy + j()], [x + cw * 0.9 - gap + j(), y + gap + dy + j()],
        [x + cw * 0.9 - gap + j(), y + ch - gap + j()], [x + gap + j(), y + ch - gap + j()],
      ];
      if (keep) d += "M" + pts.map(([a, b]) => `${a.toFixed(1)} ${b.toFixed(1)}`).join("L") + "z";
    }
  return d;
}

/* Short wandering boundary lines. */
function wander(x0: number, y0: number, x1: number, y1: number, n: number, step: number, len: number, seed: number) {
  const r = rng(seed);
  let d = "";
  for (let i = 0; i < n; i++) {
    let x = x0 + r() * (x1 - x0);
    let y = y0 + r() * (y1 - y0);
    let a = r() * 6.28;
    const turn = (r() - 0.5) * 0.7;
    d += `M${x.toFixed(1)} ${y.toFixed(1)}`;
    for (let k = 0; k < len; k++) {
      a += turn + (r() - 0.5) * 1.3;
      x += Math.cos(a) * step;
      y += Math.sin(a) * step;
      d += `L${x.toFixed(1)} ${y.toFixed(1)}`;
    }
  }
  return d;
}

const SOUTH = "M115 20L118 50 127 75 108 95 112 110 68 125 32 148 85 240 180 355 310 548 360 480 410 460 415 472 432 472 437 455 520 438 540 445 590 452 650 452 730 475 800 480 870 474 950 462 1060 436 1230 430 1380 428 1410 415 1450 380 1490 360 1525 360 1523 170 1512 178 1490 145 1460 155 1430 185 1412 182 1410 130 1385 110 1385 75 1375 55 1350 52 1338 40 1320 60 1280 65 1262 80 1252 105 1210 97 1190 60 1175 20z";
const DENSE = "M255 60L262 100 300 120 335 125 345 170 320 185 350 205 375 225 400 240 425 275 435 240 475 235 465 20 345 20 300 45zM600 20L800 20 800 180 830 230 860 400 650 412 640 245 585 235 590 120zM840 180L860 190 935 235 960 225 960 80 975 20 1165 20 1210 97 1250 105 1275 150 1345 110 1385 110 1412 185 1523 170 1523 330 1450 360 1400 425 1060 430 850 410 820 250zM655 418L1060 392 1230 384 1390 420 1060 436 950 462 870 474 800 480 730 475 650 450zM218 182L240 230 243 290 215 335 165 325 195 290 215 250 205 205zM290 310L330 290 355 310 345 340 300 350 280 335z";
const OPEN = "M465 20L598 20 595 100 585 235 475 235 470 170 480 168 483 160 512 162 515 182 543 182 545 172 582 172 M798 20L972 20 945 80 950 150 960 220 905 195 858 172 845 182 805 175z M862 192C885 195 925 222 935 240L950 320Q950 350 935 354L895 352Q865 300 842 238Q845 205 862 192z M960 85L975 75 1000 95 1060 92 1058 120 1030 150 1035 175 1020 205 985 208 962 150z M645 55L660 50 678 60 680 85 665 125 648 120 650 90z M592 113L628 120 620 168 590 162z M742 135L770 138 764 190 740 188z M680 150L698 148 714 183 694 190z M1255 100L1270 70 1300 65 1302 110 1275 138z M1303 90L1336 60 1345 112 1312 118z M1348 55L1378 57 1384 85 1362 122 1345 90z M1312 238L1335 216 1352 222 1342 250 1325 250z M1464 220L1490 218 1479 257z M1318 282L1336 272 1345 280 1340 310 1320 305z M1075 320L1100 318 1098 360 1068 362z M315 350L350 343 380 375 415 410 385 430 350 440 312 415 300 375z M285 228L320 210 356 236 318 266 292 255z M640 370L655 372 655 404 615 404 612 372z M745 250L778 248 772 280 752 282z M428 65L445 60 457 75 452 125 440 120 430 90z M755 35L770 40 772 70 758 65z M1128 50L1142 48 1143 70 1126 70z M190 310L205 298 222 315 212 335 192 328z M327 270L360 260 382 282 350 300 328 296z M413 242L435 242 434 288 413 283z M1085 150L1118 150 1112 200 1075 200 1085 175z M765 362L778 365 780 400 768 396z M1410 310L1420 312 1426 340 1412 335z M1180 310L1222 345 1225 368 1205 365z";
const NORTH = "M78 236L105 232 115 223 150 206 165 207 197 182 225 180 247 154 280 138 345 127 405 131 420 112 440 101 478 104 520 102 570 83 592 76 632 53 648 62 670 65 689 72 673 130 680 157 765 148 795 163 808 186 800 210 794 240 825 268 850 300 893 400 880 430 882 500 882 1078 198 1078 170 1080 165 1093 155 1098 142 1090 155 1065 150 1040 130 1020 130 980 150 945 163 900 135 880 132 850 105 810 82 792 75 760 77 715 62 690 85 625 80 560 62 450 64 405 45 355 38 335 42 300z";

const smallParcels = parcels(260, 24, 1525, 480, 6, 6.5, 2, 0.13, 7) + parcels(600, 24, 1100, 470, 12, 14, 2, 0.1, 21);
const cityBlocks = parcels(434, 244, 530, 450, 19, 22, 2.2, 0.85, 3) + parcels(538, 244, 662, 450, 21, 25, 2.4, 0.85, 33) + parcels(600, 100, 800, 400, 21, 23, 4, 0.32, 11) + parcels(965, 235, 1100, 390, 17, 22, 4, 0.45, 5) + parcels(1075, 40, 1120, 230, 18, 22, 4, 0.5, 9) + parcels(1280, 120, 1345, 170, 13, 15, 2, 0.7, 15) + parcels(1385, 260, 1525, 350, 16, 18, 4, 0.35, 17);
const westLines = wander(40, 60, 420, 470, 95, 9, 10, 31) + wander(200, 30, 340, 200, 40, 6, 9, 8) + wander(360, 290, 430, 420, 25, 5, 7, 18);
const hillLines = wander(95, 470, 215, 900, 95, 7, 12, 42) + wander(130, 480, 210, 700, 45, 6, 10, 4) + wander(120, 700, 210, 880, 35, 6, 10, 64) + wander(130, 970, 215, 1060, 36, 5, 9, 77);
const hatch = wander(122, 590, 192, 655, 60, 5, 8, 5) + wander(135, 1005, 200, 1045, 40, 4, 7, 12);

function MapView() {
  const id = useId();
  return (
    <svg className="absolute top-0 left-0 h-full w-full" role="img" aria-label="지도">
      <defs>
        <clipPath id={`${id}s`}><path d={SOUTH} /></clipPath>
        <clipPath id={`${id}d`}><path d={DENSE} /></clipPath>
        <clipPath id={`${id}n`}><path d={NORTH} /></clipPath>
      </defs>
      <g transform="translate(-301 -122)" strokeLinejoin="round">
        <g transform="translate(590 170) scale(.3333)" fill="none" stroke="#262929" strokeWidth="3">
          <path d={NORTH} fill="#7d8b8f" />
          <g clipPath={`url(#${id}n)`}>
            <path d="M680 157L665 210 645 238 625 250 590 251 570 264 532 260 515 280 472 302 458 325 451 365 442 385 440 435 430 458 430 500M62 448L430 458M628 492L752 466 870 494M685 480l10 20M733 470l8 30" />
            <path d="M182 452v50M190 456l35-2 5 20-2 30M68 450L88 560 92 625 70 690 84 720 84 785 112 805 140 850 165 885 200 900M62 690l14 25" />
            <path d="M296 204l16 12-10 16-17-10zM312 216l14 4 2-7 8 14-8 20-18-11zM318 226l12-2 6 18M278 144l6 2 3 8-6 3zM617 86l10-5 1 4-10 4zM655 79l4 1-3 2z" strokeWidth="2.400" />
            <path d="M152 408l6 14-10 24 14 26M104 432l24 30 22 38M144 412l-2 30" />
            <path d="M82 498l24-23 30 6 14 26-18 20-20-6zM88 520l30 22 44 0 34-46M110 605l-2 30 30 30 50 8M112 700l40 40M125 765l46 10 25-30" />
            <path d={hillLines} strokeWidth="2.400" />
            <path d={hatch} strokeWidth="4" />
            <path d="M118 590L165 600 195 632 180 655 162 662 145 640z" fill="#262929" opacity=".75" />
          </g>
        </g>
        <g transform="translate(630 690) scale(.3827 .3333)">
          <path d={SOUTH} fill="#7d8b8f" stroke="#262929" strokeWidth="3" />
          <g clipPath={`url(#${id}s)`}>
            <path d={westLines} fill="none" stroke="#262929" strokeWidth="2.300" />
            <path d="M36 150L90 240 185 352 312 545 M45 148L180 335 322 530" fill="none" stroke="#262929" strokeWidth="5" />
            <path d="M203 30L212 80 205 130 240 160 290 190 345 215 M75 130L110 100 150 95 170 130 125 150zM215 160L190 190 160 200M180 350L290 340 310 420 360 445 425 405" fill="none" stroke="#262929" strokeWidth="5" />
            <path d="M430 236H662V452H430z" fill="#262929" />
            <path d={DENSE} fill="#292c2c" />
            <path d="M260 60L345 20 470 20 475 235 430 290 340 180z" fill="#292c2c" />
            <g clipPath={`url(#${id}d)`}><path d={smallParcels} fill="#6d7a7d" opacity=".7" /></g>
            <path d={cityBlocks} fill="#7d8b8f" />
            <path d={OPEN} fill="#7d8b8f" stroke="#262929" strokeWidth="2" />
            <path d="M515 182V208H543V182M885 28L892 80 876 125 898 160 890 182M985 100V85l15 5v15M300 360l30-10 15 30" fill="none" stroke="#262929" strokeWidth="2.500" />
            <path d="M390 28L410 130 440 240 470 330 530 430M430 238H960M565 240V410M660 245V450M805 180L840 330 855 400M960 200L975 390M1075 28L1070 380M1360 100V420M650 245L790 185M345 225L430 290 520 295M600 28L580 235M860 165L960 225" fill="none" stroke="#262929" strokeWidth="5" />
            <path d="M527 240V385L542 442H518L526 385" fill="#7d8b8f" stroke="#7d8b8f" strokeWidth="7" />
            <path d="M440 413H660L770 415 900 402 1060 388 1230 382M760 415V470M921 400V455M1066 392V428M1228 380V425M1230 430L1380 426 1440 375 1520 345" fill="none" stroke="#7d8b8f" strokeWidth="4" />
            <path d="M1230 380L1523 255" stroke="#7d8b8f" strokeWidth="2" strokeDasharray="12 4" />
          </g>
        </g>
      </g>
    </svg>
  );
}

/* ---------- feature selection dialog ---------- */

const fields = ["A0", "A1", "A2", "A3", "A4", "A5", "A6", "A7", "A8", "A9"];

function FeatureDialog() {
  return (
    <section role="dialog" aria-label="피처 선택" className="absolute top-[211px] left-[354px] z-20 flex w-[611px] flex-col border border-[#a0a0a0] bg-[#f0f0f0] shadow-[0_4px_14px_#00000066]">
      <header className="flex h-[30px] items-center bg-white pr-[9px] pb-0.5 pl-2 text-xs text-[#999]">
        <Icon name="qgis" s={16} />
        <h2 className="ml-[5px] flex-1">AL_D194_11110_20240127.shp — 피처 선택</h2>
        <button aria-label="닫기">
          <svg viewBox="0 0 12 12" className="size-3"><path d="M1 1l10 10M11 1L1 11" stroke="#888" /></svg>
        </button>
      </header>
      <div className="flex pt-2 pr-[9px] pl-[18px]">
        <div className="flex flex-1 flex-col gap-1.5 pt-2.5 pb-1">
          {fields.map((f, i) => (
            <div key={f} className="flex h-[22px] items-center">
              <label htmlFor={f} className="w-[26px] text-xs">{f}</label>
              <input id={f} className="h-[22px] min-w-0 flex-1 rounded-sm border border-[#aaa] bg-white px-1" />
              {i > 0 && <span className="ml-1.5 w-[108px] text-[13px]"><Check label="Case sensitive" gap="gap-[5px]" /></span>}
              <button className={`relative ml-1.5 flex h-5 w-[68px] shrink-0 items-center pb-0.5 pl-[7px] text-[13px] whitespace-nowrap ${FACE}`}>
                필드 제외
                <span className="absolute right-px bottom-1"><svg viewBox="0 0 6 3" className="h-[3px] w-1.5"><path d="M0 0h6L3 3z" fill="#444" /></svg></span>
              </button>
            </div>
          ))}
        </div>
        <Scroll thumb="h-[99px]" className="ml-[9px]" />
      </div>
      <footer className="flex h-[39px] items-center gap-1.5 px-2 pb-1 text-[13px] leading-none whitespace-nowrap">
        <button className={`h-[22px] w-[83px] pb-px ${FACE}`}>양식 리셋 (<u>R</u>)</button>
        <button className={`h-[22px] w-[93px] pb-px ${FACE}`}>객체 플래시 (<u>F</u>)</button>
        <button className={`h-[22px] w-[90px] pb-px ${FACE}`}>Show in <u>T</u>able</button>
        <button className={`h-[22px] w-[94px] pb-px ${FACE}`}>객체로 확대 (<u>Z</u>)</button>
        <div className="flex">
          <button className={`flex h-[22px] w-[110px] items-center gap-0.5 pb-px pl-1 ${FACE}`}><Icon name="selvalue" s={14} /><span>객체 선택 (<u>S</u>)</span></button>
          <button aria-label="선택 옵션" className={`flex h-[22px] w-3 items-center justify-center ${FACE}`}><Caret /></button>
        </div>
        <button className={`h-5 flex-1 pb-px ${FACE}`}>닫기</button>
      </footer>
    </section>
  );
}

/* ---------- layer styling dock ---------- */

const SMALL = "flex h-[23px] w-6 items-center justify-center rounded-sm border bg-linear-to-b from-white to-[#f0f0f0]";

function StyleDock() {
  return (
    <aside className="flex w-[423px] shrink-0 flex-col pr-px pl-2 text-[13px]">
      <div className="pr-px pl-0.5"><DockTitle title="레이어 스타일 작업" /></div>
      <Combo label="레이어" value="AL_D194_11110_20240127.shp" icon="polygon" className="mt-[3px] mr-0.5 ml-px h-6 text-xs" />
      <div className="ml-px flex min-h-0 flex-1">
        <nav className="mb-1 flex w-[38px] shrink-0 flex-col">
          <button aria-label="심볼" className="flex h-[39px] items-center justify-center pt-1 pr-1"><Icon name="brush" s={22} /></button>
          <div className="flex flex-1 flex-col items-center gap-2.5 bg-[#5e5e5e] pt-1 pr-1.5">
            {["label", "abc", "rgb", "terrain", "tree", "history"].map((n) => (
              <button key={n} aria-label={n}><Icon name={n} s={22} /></button>
            ))}
          </div>
        </nav>
        <div className="flex min-w-0 flex-1 flex-col pt-3 pr-0.5 pl-[3px]">
          <Combo label="렌더러" value="단일 심볼" icon="single" className="h-6 shrink-0" />
          <div className="mt-1.5 flex h-[127px] shrink-0 gap-1.5">
            <div className="flex w-[100px] items-center justify-center"><span className="size-[61px] border border-[#333] bg-[#7d8b8f]" /></div>
            <ul className="flex-1 border border-[#b8b8b8] bg-white">
              <li className="flex h-[18px] items-center bg-[#f0f0f0] pl-1.5 font-bold"><Caret /><span className="mr-1.5 ml-2.5 size-4 border border-[#5b6669] bg-[#7d8b8f]" />채우기</li>
              <li className="flex h-[18px] items-center pl-[43px]"><span className="mr-1.5 size-4 border border-[#5b6669] bg-[#7d8b8f]" />단순 채우기</li>
            </ul>
            <div className="grid auto-rows-min grid-cols-2 gap-x-1.5 gap-y-1">
              <button aria-label="추가" className={`${SMALL} border-[#aaa]`}><Icon name="plus" s={16} /></button>
              {["up", "minus", "down", "dup", "lockopen"].map((n) => (
                <button key={n} aria-label={n} className={`${SMALL} border-[#ccc]`}><Icon name={n} s={16} /></button>
              ))}
            </div>
          </div>
          <hr className="mt-1.5 shrink-0 border-[#a8a8a8]" />
          <div className="flex min-h-0 flex-1 flex-col pr-[9px]">
            <div className="mt-2 grid shrink-0 grid-cols-[54px_1fr] items-center gap-y-2">
              <span>색상</span>
              <div className="flex">
                <button aria-label="색상" className={`h-[22px] flex-1 px-1 py-0.5 ${FACE}`}><span className="block h-4 rounded-sm border border-[#9aa5a8] bg-[#7d8b8f]" /></button>
                <button aria-label="색상 메뉴" className={`flex h-[22px] w-3 items-center justify-center ${FACE}`}><Caret /></button>
              </div>
              <label htmlFor="opacity">불투명도</label>
              <div className="flex h-[22px] items-center gap-[5px]">
                <input id="opacity" type="range" defaultValue={100} className="h-3.5 min-w-0 flex-1 appearance-none bg-transparent [&::-webkit-slider-runnable-track]:h-1.5 [&::-webkit-slider-runnable-track]:border [&::-webkit-slider-runnable-track]:border-[#1666b0] [&::-webkit-slider-runnable-track]:bg-[#2492ee] [&::-webkit-slider-thumb]:-mt-[5px] [&::-webkit-slider-thumb]:size-3.5 [&::-webkit-slider-thumb]:appearance-none [&::-webkit-slider-thumb]:rounded-[3px] [&::-webkit-slider-thumb]:border [&::-webkit-slider-thumb]:border-[#a8a8a8] [&::-webkit-slider-thumb]:bg-white" />
                <Spin label="불투명도 값" value="100.0 %" className="h-5 w-[100px]" />
                <button aria-label="재정의" className="mr-1 ml-1.5"><Icon name="override" s={22} /></button>
              </div>
              <span>단위</span>
              <Combo label="단위" value="밀리미터" className="h-[22px]" />
            </div>
            <hr className="mt-1 shrink-0 border-[#a8a8a8]" />
            <div className="mt-1.5 flex shrink-0 items-center">
              <div className="flex h-[22px] flex-1 items-center rounded-sm border border-[#aaa] bg-white pl-2.5">
                <Icon name="search" s={12} />
                <input aria-label="심볼 검색" defaultValue="즐겨찾기" className="ml-2 min-w-0 flex-1 bg-transparent pb-0.5 outline-none" />
                <button aria-label="지우기" className="mr-2"><Icon name="clear" s={14} /></button>
                <button aria-label="목록" className="flex h-full w-5 items-center justify-center border-l border-[#b8b8b8]"><Caret /></button>
              </div>
              <button aria-label="스타일 관리자" className="mr-1 ml-2.5"><Icon name="style" s={16} /></button>
            </div>
            <div className="mt-[5px] flex min-h-0 flex-1 border border-[#b8b8b8] bg-white">
              <div className="flex-1 overflow-hidden pt-2 pr-1.5 pl-[5px]">
                <h3 className="border-b border-[#c4c4c4] text-base leading-5 font-bold">Project Styles</h3>
                <h3 className="mt-[7px] border-b border-[#c4c4c4] text-[17px] leading-5 font-bold">기본값</h3>
                <div className="flex w-[168px] flex-col items-center">
                  <span className="mt-6 h-[71px] w-[83px] border border-[#222] bg-[radial-gradient(circle_at_0_0,#0d0887,#7e03a8_30%,#cc4778_53%,#f0804e_73%,#fdc328_92%,#f0f921)]" />
                  <span className="mt-12 flex gap-3 text-xs leading-4"><span>gradient</span><span>plasma</span></span>
                  <span className="mt-[53px] h-[70px] w-[82px] border border-[#bbb] bg-[#969696]" />
                  <span className="mt-[50px] text-xs leading-4">gray 3 fill</span>
                </div>
              </div>
              <Scroll thumb="h-[60px]" />
            </div>
            <div className="mt-[5px] flex shrink-0 items-center gap-1.5">
              <button aria-label="아이콘 보기" className="flex size-6 items-center justify-center rounded-sm border border-[#aaa] bg-[#dcdcdc]"><Icon name="gridview" s={14} /></button>
              <button aria-label="목록 보기"><Icon name="listview" s={14} /></button>
              <span className="flex-1" />
              <button className={`h-5 w-20 pb-px leading-none ${FACE}`}>심볼 저장⋯</button>
              <button className={`flex h-5 w-20 items-center justify-end gap-5 pr-[7px] pb-px leading-none ${FACE}`}>확장<Caret dim /></button>
            </div>
            <button className="mt-[18px] flex h-5 shrink-0 items-center gap-2.5 pl-[5px] font-bold">
              <svg viewBox="0 0 7 12" className="h-3 w-[7px]"><path d="M0 0v12l7-6z" fill="#333" /></svg>레이어 렌더링
            </button>
          </div>
          <div className="mt-1.5 mb-1 flex shrink-0 items-center">
            <button aria-label="실행 취소" className={`${SMALL} border-[#aaa]`}><Icon name="undo" s={14} /></button>
            <button aria-label="다시 실행" className={`${SMALL} ml-1.5 border-[#aaa]`}><Icon name="redo" s={14} /></button>
            <span className="flex-1" />
            <Check label="실시간 업데이트" checked gap="gap-1.5" />
            <button className={`ml-3 h-5 w-20 pb-px leading-none ${FACE}`}>적용</button>
          </div>
        </div>
      </div>
      <div role="tablist" className="-ml-px flex h-[22px] items-start border-t border-[#b8b8b8]">
        <button role="tab" aria-selected="true" className="h-[21px] w-32 rounded-b-sm border border-t-0 border-[#b8b8b8] bg-[#f7f7f7] pb-0.5 leading-none">레이어 스타일 작업</button>
        <button role="tab" aria-selected="false" className="h-[19px] w-[115px] rounded-b-sm border border-t-0 border-l-0 border-[#b8b8b8] bg-[#dedede] pb-0.5 leading-none">공간 처리 툴박스</button>
      </div>
    </aside>
  );
}

/* ---------- status bar ---------- */

function StatusBar() {
  return (
    <footer className="flex h-[29px] shrink-0 items-center pr-1.5 pl-1 text-xs whitespace-nowrap">
      <div className="flex h-[22px] w-[356px] items-center rounded-sm border border-[#aaa] bg-white pl-2">
        <Icon name="search" s={12} />
        <input aria-label="위치 검색" placeholder="위치를 찾으려면 입력하세요 (Ctrl+K)" className="ml-2 w-full bg-transparent pb-0.5 text-[13px] outline-none placeholder:text-[#888]" />
      </div>
      <p className="ml-2 flex-1">0 feature(s) selected on layer AL_D194_11110_20240127.shp.</p>
      <label htmlFor="coord">좌표</label>
      <input id="coord" defaultValue="559891, 197849" className="ml-1 h-[22px] w-[95px] rounded-sm border border-[#aaa] bg-white text-center outline-none" />
      <button aria-label="범위" className="ml-1"><Icon name="extent" s={16} /></button>
      <span className="ml-3">축척</span>
      <div className="ml-1 flex h-[22px] w-[82px] items-center rounded-sm border border-[#aaa] bg-white">
        <input aria-label="축척" defaultValue="1:40711" className="min-w-0 flex-1 bg-transparent pl-1 outline-none" />
        <button aria-label="축척 목록" className="flex h-full w-5 items-center justify-center border-l border-[#b8b8b8]"><Caret /></button>
      </div>
      <button aria-label="축척 잠금" className="ml-2.5"><Icon name="lock" s={14} /></button>
      <span className="ml-2">확대경</span>
      <Spin label="확대경" value="100%" className="ml-1 h-[22px] w-[86px]" />
      <span className="ml-2">회전</span>
      <Spin label="회전" value="0.0 °" className="ml-2.5 h-[22px] w-[85px]" />
      <span className="ml-1.5"><Check label="렌더링" checked gap="gap-1" /></span>
      <button className="ml-[15px] flex items-center gap-0.5"><Icon name="crs" s={16} />EPSG:5186</button>
      <button aria-label="메시지" className="ml-6"><Icon name="bubble" s={16} /></button>
    </footer>
  );
}

/* ---------- desktop taskbar ---------- */

const chrome = (
  <>
    <circle cx="12" cy="12" r="12" fill="#4caf50" />
    <path d="M12 12L1.600 6A12 12 0 0122.400 6z" fill="#e33b2e" />
    <path d="M12 12L22.400 6A12 12 0 0112 24z" fill="#fcc934" />
    <path d="M12 6h10.400A12 12 0 0112 24l5-9z" fill="#fcc934" />
    <circle cx="12" cy="12" r="5.800" fill="#fff" />
    <circle cx="12" cy="12" r="4.500" fill="#3b78e7" />
  </>
);

const apps: { name: string; art: React.ReactNode; state: string }[] = [
  { name: "파일 탐색기", state: "open", art: <><path d="M1 3h8l2 3H1z" fill="#d99c1c" /><path d="M1 5h22v17H1z" fill="#fcd462" /><path d="M5 13h14v9h-4v-4H9v4H5z" fill="#3a94dd" /></> },
  { name: "Edge", state: "", art: <><circle cx="12" cy="12" r="12" fill="#1b7fd4" /><path d="M0 11C1-3 24-4 24 9c0 5-6 6-9 4 2-2 1-6-4-6C6 7 1 8 0 11z" fill="#46cfc0" /><path d="M14 3c6 0 10 3 10 7 0 3-3 4-6 4 2-5 0-9-4-11z" fill="#6fdc6a" /><path d="M8 14c0 6 7 8 13 5-4 6-13 6-17 0-3-5 0-11 7-11-2 1-3 3-3 6z" fill="#0d56a6" /></> },
  { name: "Chrome", state: "", art: chrome },
  { name: "Whale", state: "", art: <><path d="M0 9c2-2 3 0 4 2 1-1 3-1 3 1-1 2-3 3-4 3 1 5 4 9 10 9 8 0 11-8 11-16-5-1-9 1-12 4-3 2-6 0-7-2-1-2-4-3-5-1z" fill="#20c9b3" /><path d="M23 7c2 8-2 16-10 17 4-4 2-12 10-17z" fill="#e7f4f4" /><path d="M4 9C4 2 11-1 17 1c4 1 6 4 6 7-6-2-9 5-14 4-3 0-5-1-5-3z" fill="#15205e" /></> },
  { name: "캡처", state: "", art: <><rect width="24" height="24" rx="4" fill="#252342" /><path d="M7 3v14h14M3 7h14v14M20 3L8 16" fill="none" stroke="#f7d26a" strokeWidth="2.200" /></> },
  { name: "QGIS", state: "active", art: <><path d="M12 0a12 12 0 107 21.500l-3.500-4A7 7 0 1119 12.500l3.500 4A12 12 0 0012 0z" fill="#84ad2c" /><path d="M10 9.500l5 0 9 10-3 3.500-10-10z" fill="#a4cc5c" /><path d="M9.500 8.500l5 1.500 3 3-3.500 2-4-3z" fill="#f28c2a" /></> },
  { name: "Chrome 2", state: "open", art: <>{chrome}<circle cx="18.500" cy="18" r="7" fill="#cdd5e0" /><path d="M12 20l5-5 3 3 5 0c0 4-3 7-6.500 7S12 23 12 20z" fill="#3a3128" /></> },
  { name: "메모장", state: "open", art: <><path d="M8 2l13 1-4 19-16-3z" fill="#8cc9dd" /><path d="M20 3l3 1-2 18-5 1-2-2z" fill="#eef4f6" /><path d="M8 1l13 2-1 2-13-2z" fill="#ccd" /></> },
];

function Taskbar() {
  return (
    <footer className="flex h-10 shrink-0 bg-linear-to-r from-[#21383f] via-[#20333f] to-[#1a2540] text-white">
      <button aria-label="시작" className="flex w-12 items-center justify-center">
        <svg viewBox="0 0 16 16" className="size-4"><path d="M0 2.300L6.500 1.400v6.200H0zM7.500 1.200L16 0v7.600H7.500zM0 8.500h6.500v6.200L0 13.700zM7.500 8.500H16V16l-8.500-1.200z" fill="#fff" /></svg>
      </button>
      <label className="relative flex w-72 items-center overflow-hidden border border-[#c5c5c5] bg-[#f2f2f2] pl-2.5 text-black">
        <svg viewBox="0 0 18 18" className="size-[18px] shrink-0"><circle cx="11" cy="7" r="5.500" fill="none" stroke="#222" strokeWidth="1.300" /><path d="M7 11l-6 6.500" stroke="#222" strokeWidth="1.300" /></svg>
        <input placeholder="찾기" aria-label="찾기" className="ml-3 w-full bg-transparent pb-0.5 text-[15px] outline-none placeholder:text-[#333]" />
        <svg viewBox="0 0 80 40" className="pointer-events-none absolute right-0 bottom-0 h-10 w-20">
          <path d="M0 40C16 30 55 30 80 33v7z" fill="#6a9c55" />
          <path d="M51 24L44 40M34 28l4 12M44 40C42 32 36 30 34 30M50 38c6-8 12-8 14-14" fill="none" stroke="#3f8a3c" strokeWidth="3" />
          <path d="M15 17c0 5 9 7 9 13 0 5-4 7-8 7s-8-2-8-7c0-6 7-8 7-13z" fill="#6b4a93" /><path d="M13 24c-3 5-3 8 0 12M19 25c2 4 2 7 0 11" fill="none" stroke="#8e6db8" />
          <path d="M24 17l6 3 4-5 3 5 6-3-2 10c-1 5-12 6-14 0z" fill="#f5a81c" /><path d="M30 20l4 10 4-11" fill="#ffcf3c" />
          <path d="M40 7l8 4 2-8 5-1 3 7 9-3-5 15c-3 6-14 6-17-1z" fill="#f9b61e" /><path d="M48 10l6 13 5-15" fill="#ffd64a" /><path d="M50 8l4-2 4 3-3 4z" fill="#ee6418" />
          <circle cx="66" cy="32" r="6" fill="#f0a22a" /><circle cx="66" cy="32" r="2" fill="#a8560f" />
        </svg>
      </label>
      <div className="ml-[3px] flex">
        {apps.map((a) => (
          <button key={a.name} aria-label={a.name} className={`mr-px flex w-12 flex-col items-center justify-between pt-2 ${a.state === "active" ? "bg-[#4c6069]" : ""}`}>
            <svg viewBox="0 0 24 24" className="size-6">{a.art}</svg>
            <span className={`h-0.5 ${a.state === "active" ? "w-full bg-[#76b9ed]" : a.state === "open" ? "w-10 bg-[#76b9ed]" : ""}`} />
          </button>
        ))}
      </div>
      <div className="ml-auto flex items-center pr-6">
        <svg viewBox="0 0 136 24" className="h-6 w-[136px]" fill="none" stroke="#fff" strokeWidth="1.300">
          <path d="M1 15l5.500-6 5.500 6" />
          <path d="M26 8h7v9h-7zM33 11l4-2v6l-4-2M27 4c3-2 5-2 8 0M27 20c3 2 5 2 8 0" />
          <path d="M49 5l12-2v8M49 5v15h6M52 9c2-3 6-2 6 0M58 13c-2 3-6 2-6 0" /><circle cx="60" cy="18" r="4" fill="#2b7cd3" stroke="none" />
          <path d="M72 5h4v8h-4zM78 6h9v9H74M80 15v4M76 19h9" />
          <path d="M96 10h3l4-4v12l-4-4h-3zM105 9c2 2 2 4 0 6M108 7c3 3 3 7 0 10" />
          <circle cx="126" cy="12" r="7" fill="#8a93a3" stroke="none" /><path d="M123 9l6 6M129 9l-6 6" stroke="#1c2a40" strokeWidth="2" />
        </svg>
        <span className="ml-3 flex size-4 items-center justify-center bg-white pb-px text-[13px] leading-none text-[#1b2840]">한</span>
        <time className="ml-2.5 w-20 text-center text-xs leading-[18px]">오후 3:27<br />2024-02-04</time>
        <button aria-label="알림" className="ml-3.5">
          <svg viewBox="0 0 18 18" className="size-[18px]" fill="none" stroke="#fff" strokeWidth="1.300"><path d="M1 2h16v12h-5l-3 3-3-3H1z" /></svg>
        </button>
      </div>
    </footer>
  );
}

/* ---------- window ---------- */

export default function App() {
  return (
    <div className="flex h-screen flex-col overflow-hidden bg-[#f0f0f0] font-['Noto_Sans_CJK_KR','Noto_Sans',sans-serif] leading-none text-black">
      <header className="flex h-[23px] shrink-0 items-center bg-white pb-px pl-0.5 text-[13px]">
        <Icon name="qgis" s={16} />
        <h1 className="ml-[5px] flex-1">*제목 없는 프로젝트 — QGIS</h1>
        <svg viewBox="0 0 108 12" className="mr-[18px] h-3 w-[108px]" fill="none" stroke="#222">
          <path d="M5 6.500h10M50.500 3.500h7v7h-7zM52.500 3.500v-2h7v7h-2M96 1l10 10M106 1L96 11" />
        </svg>
      </header>
      <nav className="flex h-5 shrink-0 items-center gap-3.5 border-b border-[#d5d5d5] pb-px pl-2.5 text-[13px] whitespace-nowrap">
        {menus.map(([t, k]) => <button key={t}>{t} (<u>{k}</u>)</button>)}
      </nav>
      <Toolbars />
      <main className="flex min-h-0 flex-1">
        <LeftDocks />
        <div className="w-1.5 shrink-0" />
        <div className="relative min-w-0 flex-1 border border-[#b8b8b8] bg-white">
          <MapView />
          <FeatureDialog />
        </div>
        <StyleDock />
      </main>
      <StatusBar />
      <Taskbar />
    </div>
  );
}
